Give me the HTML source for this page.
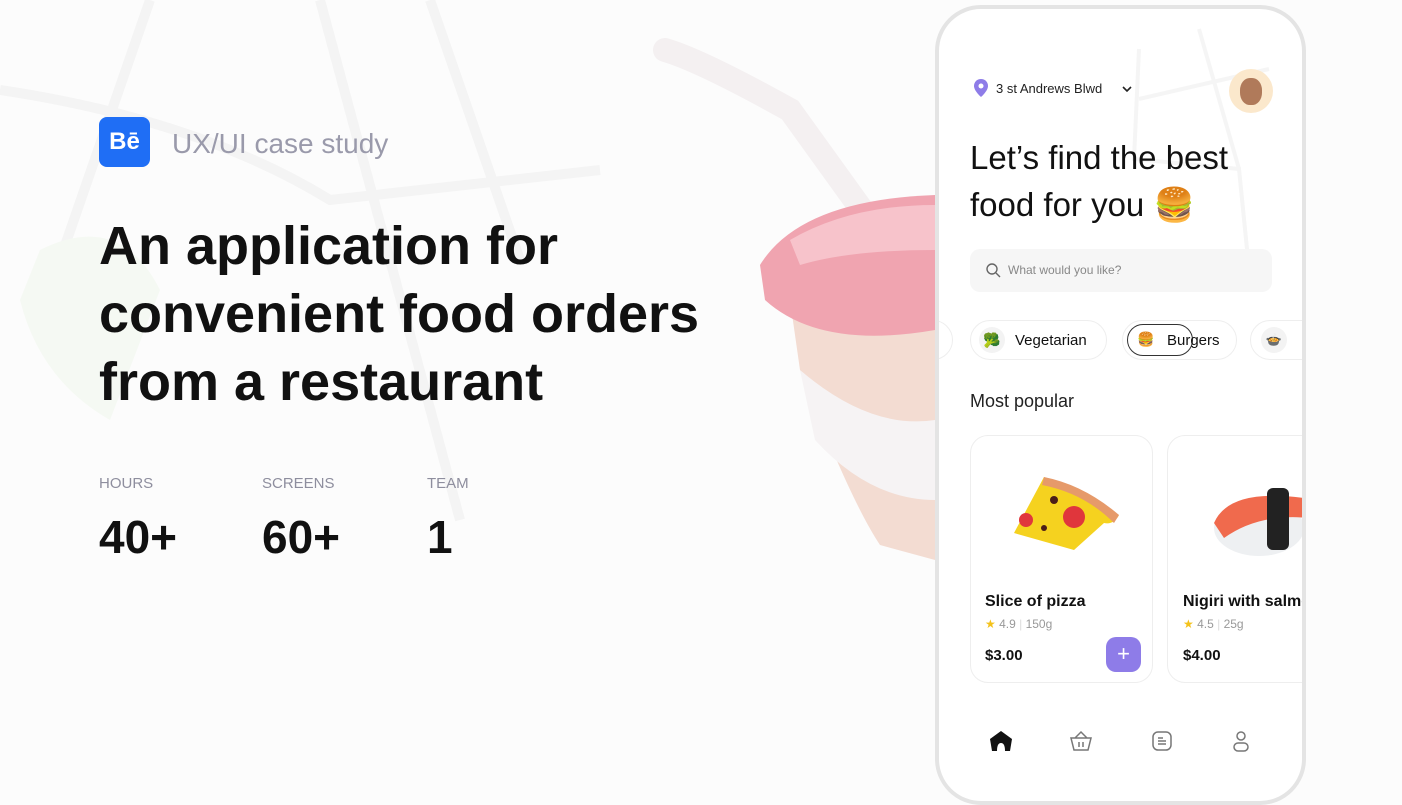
<!DOCTYPE html>
<html><head><meta charset="utf-8"><style>
*{margin:0;padding:0;box-sizing:border-box}
body{width:1402px;height:783px;overflow:hidden;background:#fcfcfc;font-family:"Liberation Sans",sans-serif;position:relative;color:#111}
.abs{position:absolute}
</style></head><body>
<svg class="abs" style="left:0;top:0" width="1402" height="783">
<g stroke="#f4f4f4" stroke-width="10" fill="none">
<path d="M150 0 L60 260"/><path d="M0 90 Q200 120 330 200 L600 170"/><path d="M430 0 L520 260"/><path d="M320 0 Q400 300 460 520"/>
</g>
<path d="M40 250 Q120 210 160 290 L110 420 Q40 380 20 300Z" fill="#f5f9f3"/>
<path d="M665 50 Q700 60 790 110 L880 235" stroke="#f4f0f1" stroke-width="24" fill="none" stroke-linecap="round"/>
<path d="M790 300 L935 300 L935 560 L880 545 Q850 500 800 370Z" fill="#f3dcd2"/>
<path d="M800 370 Q870 430 935 420 L935 500 Q870 500 815 440Z" fill="#f6f3f4"/>
<path d="M760 265 Q800 200 935 195 L935 330 Q820 350 765 300Z" fill="#f0a4b0"/>
<path d="M790 240 Q850 205 935 205 L935 250 Q850 250 800 265Z" fill="#f7c3cb"/>
</svg>
<div class="abs" style="left:99px;top:117px;width:51px;height:50px;background:#1f6ef5;border-radius:8px;color:#fff;font-weight:bold;font-size:24px;line-height:50px;text-align:center">Bē</div>
<div class="abs" style="left:172px;top:128px;font-size:28px;color:#9a9aab">UX/UI case study</div>
<div class="abs" style="left:99px;top:212px;font-size:54px;font-weight:bold;line-height:68px;color:#111">An application for<br>convenient food orders<br>from a restaurant</div>
<div class="abs" style="left:99px;top:475px;font-size:15px;color:#8e8e9e">HOURS</div>
<div class="abs" style="left:262px;top:475px;font-size:15px;color:#8e8e9e">SCREENS</div>
<div class="abs" style="left:427px;top:475px;font-size:15px;color:#8e8e9e">TEAM</div>
<div class="abs" style="left:99px;top:510px;font-size:46px;font-weight:bold">40+</div>
<div class="abs" style="left:262px;top:510px;font-size:46px;font-weight:bold">60+</div>
<div class="abs" style="left:427px;top:510px;font-size:46px;font-weight:bold">1</div>

<div class="abs" style="left:935px;top:5px;width:371px;height:800px;border:4px solid #e4e4e4;border-radius:46px;background:#fff;overflow:hidden">
 <svg class="abs" style="left:0;top:0" width="371" height="300"><g stroke="#f5f5f5" stroke-width="4" fill="none"><path d="M200 40 L195 150 L300 160 L310 260"/><path d="M260 20 L300 160"/><path d="M200 90 L330 60"/></g></svg>
 <svg class="abs" style="left:35px;top:70px" width="14" height="18" viewBox="0 0 14 18"><path d="M7 0C3 0 0 3 0 7c0 5 7 11 7 11s7-6 7-11C14 3 11 0 7 0z" fill="#8e7ce8"/><circle cx="7" cy="7" r="2.5" fill="#fff"/></svg>
 <div class="abs" style="left:57px;top:72px;font-size:13px;color:#222">3 st Andrews Blwd</div>
 <svg class="abs" style="left:182px;top:76px" width="12" height="8"><path d="M2 2l4 4 4-4" stroke="#222" stroke-width="1.6" fill="none"/></svg>
 <div class="abs" style="left:290px;top:60px;width:44px;height:44px;border-radius:50%;background:#fbe8cc"><div style="margin:9px auto 0;width:22px;height:27px;border-radius:45%;background:#b07a5a"></div></div>
 <div class="abs" style="left:31px;top:125px;font-size:33px;line-height:47px;color:#111">Let’s find the best<br>food for you 🍔</div>
 <div class="abs" style="left:31px;top:240px;width:302px;height:43px;background:#f6f6f6;border-radius:10px"></div>
 <svg class="abs" style="left:47px;top:254px" width="15" height="15"><circle cx="6" cy="6" r="5" stroke="#666" stroke-width="1.4" fill="none"/><path d="M10 10l4 4" stroke="#666" stroke-width="1.4"/></svg>
 <div class="abs" style="left:69px;top:254px;font-size:12px;color:#888">What would you like?</div>
 <div class="abs" style="left:-30px;top:311px;width:44px;height:40px;border:1px solid #eee;border-radius:20px"></div>
 <div class="abs" style="left:31px;top:311px;width:137px;height:40px;border:1px solid #eee;border-radius:20px"></div>
 <div class="abs" style="left:40px;top:318px;width:26px;height:26px;border-radius:50%;background:#f3f3f3;font-size:14px;text-align:center;line-height:26px">🥦</div>
 <div class="abs" style="left:76px;top:323px;font-size:15px">Vegetarian</div>
 <div class="abs" style="left:183px;top:311px;width:115px;height:40px;border:1px solid #eee;border-radius:20px"></div>
 <div class="abs" style="left:188px;top:315px;width:66px;height:32px;border:1.5px solid #333;border-radius:16px"></div>
 <div class="abs" style="left:198px;top:322px;font-size:14px">🍔</div>
 <div class="abs" style="left:228px;top:323px;font-size:15px">Burgers</div>
 <div class="abs" style="left:311px;top:311px;width:80px;height:40px;border:1px solid #eee;border-radius:20px"></div>
 <div class="abs" style="left:322px;top:318px;width:26px;height:26px;border-radius:50%;background:#f3f3f3;font-size:13px;text-align:center;line-height:26px">🍲</div>
 <div class="abs" style="left:31px;top:382px;font-size:18px;color:#222">Most popular</div>
 <div class="abs" style="left:31px;top:426px;width:183px;height:248px;border:1px solid #eee;border-radius:18px"></div>
 <div class="abs" style="left:228px;top:426px;width:183px;height:248px;border:1px solid #eee;border-radius:18px"></div>
 <svg class="abs" style="left:65px;top:466px" width="120" height="85"><path d="M40 2 L115 40 Q110 50 100 48 L70 75 L10 58 Z" fill="#f5d21f"/><path d="M40 2 Q80 10 115 40 L110 48 Q80 18 38 10Z" fill="#e69a6a"/><circle cx="70" cy="42" r="11" fill="#e0363c"/><circle cx="22" cy="45" r="7" fill="#e0363c"/><circle cx="50" cy="25" r="4" fill="#4a1d18"/><circle cx="40" cy="53" r="3" fill="#4a1d18"/></svg>
 <svg class="abs" style="left:270px;top:474px" width="100" height="75"><ellipse cx="50" cy="45" rx="45" ry="28" fill="#eef0f2"/><path d="M5 40 Q20 5 95 15 L100 35 Q50 30 15 55Z" fill="#f06a4d"/><rect x="58" y="5" width="22" height="62" rx="6" fill="#222"/></svg>
 <div class="abs" style="left:46px;top:584px;font-size:16px;font-weight:bold">Slice of pizza</div>
 <div class="abs" style="left:46px;top:608px;font-size:12px;color:#999"><span style="color:#f4c21b">★</span> 4.9 <span style="color:#ddd">|</span> 150g</div>
 <div class="abs" style="left:46px;top:638px;font-size:15px;font-weight:bold">$3.00</div>
 <div class="abs" style="left:167px;top:628px;width:35px;height:35px;border-radius:10px;background:#8e7ce8;color:#fff;font-size:22px;text-align:center;line-height:34px">+</div>
 <div class="abs" style="left:244px;top:584px;font-size:16px;font-weight:bold;white-space:nowrap">Nigiri with salmon</div>
 <div class="abs" style="left:244px;top:608px;font-size:12px;color:#999"><span style="color:#f4c21b">★</span> 4.5 <span style="color:#ddd">|</span> 25g</div>
 <div class="abs" style="left:244px;top:638px;font-size:15px;font-weight:bold">$4.00</div>
 <svg class="abs" style="left:50px;top:721px" width="24" height="22"><path d="M12 1 L23 9 L21 21 L16 21 Q16 13 12 13 Q8 13 8 21 L3 21 L1 9Z" fill="#111"/></svg>
 <svg class="abs" style="left:130px;top:721px" width="24" height="22"><path d="M2 8h20l-3 12H5z M6 8l6-6 6 6 M10 12v5 M14 12v5" stroke="#777" stroke-width="1.5" fill="none"/></svg>
 <svg class="abs" style="left:212px;top:721px" width="22" height="22"><rect x="2" y="2" width="18" height="18" rx="5" stroke="#777" stroke-width="1.5" fill="none"/><path d="M7 8h5M7 11h8M7 14h8" stroke="#777" stroke-width="1.4"/></svg>
 <svg class="abs" style="left:293px;top:721px" width="18" height="24"><circle cx="9" cy="6" r="4" stroke="#777" stroke-width="1.5" fill="none"/><rect x="2" y="13" width="14" height="8" rx="4" stroke="#777" stroke-width="1.5" fill="none"/></svg>
</div>
</body></html>
